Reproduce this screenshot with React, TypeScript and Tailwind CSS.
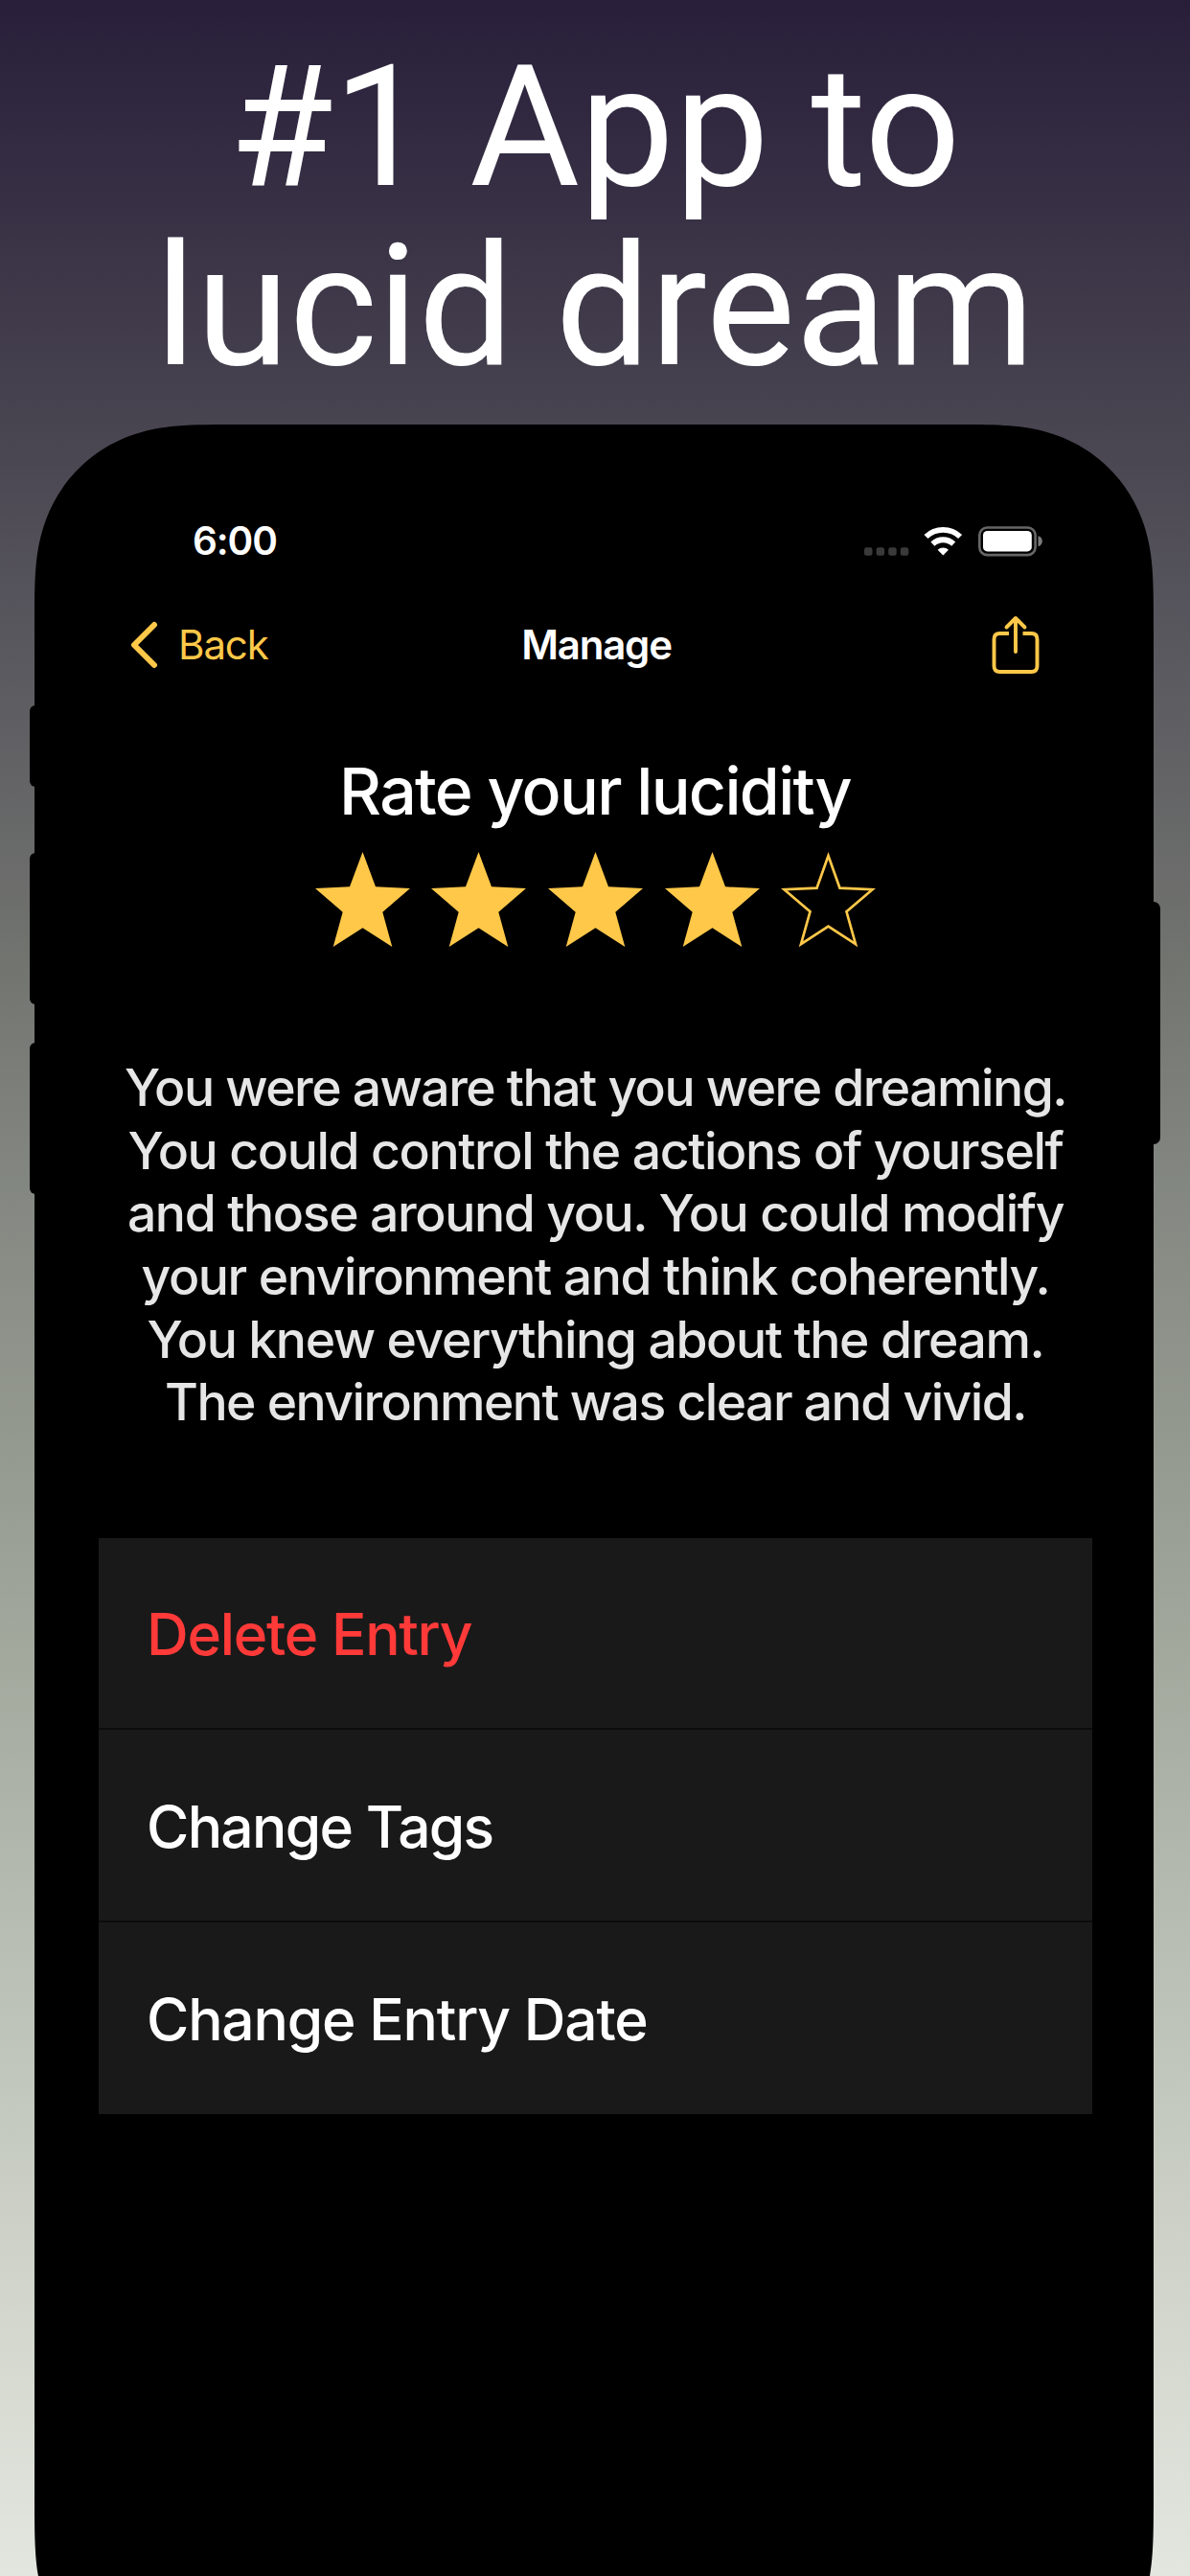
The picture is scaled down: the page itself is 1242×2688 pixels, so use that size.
const STARS = [true, true, true, true, false];

const ACTIONS = [
  { label: "Delete Entry", style: "text-[#ff3a39] tracking-[-1.25px]" },
  { label: "Change Tags", style: "text-white tracking-[-1.7px]" },
  { label: "Change Entry Date", style: "text-white tracking-[-1.2px]" },
];

const DESCRIPTION = [
  { text: "You were aware that you were dreaming.", style: "tracking-[-1.55px]" },
  { text: "You could control the actions of yourself", style: "tracking-[-1.4px]" },
  { text: "and those around you. You could modify", style: "tracking-[-1.4px]" },
  { text: "your environment and think coherently.", style: "tracking-[-1.4px]" },
  { text: "You knew everything about the dream.", style: "tracking-[-1.4px]" },
  { text: "The environment was clear and vivid.", style: "tracking-[-1.55px]" },
];

function Star({ filled }: { filled: boolean }) {
  return (
    <svg width="99" height="100" viewBox="0 0 99 100" className="block">
      {filled ? (
        <path d="M49.5 0L63 36.3 99 38 70.3 62.8 80.3 99 49.5 79.3 18.7 99 28.7 62.8 0 38 36 36.3z" fill="#ffc849" />
      ) : (
        <path
          d="M49.5 4L61.5 37.7 95.5 39.2 68.5 62.3 78 96.2 49.5 77.7 21 96.2 30.5 62.3 3.5 39.2 37.5 37.7z"
          fill="none"
          stroke="#ffc849"
          strokeWidth="2.7"
        />
      )}
    </svg>
  );
}

function StatusBar() {
  return (
    <div className="flex h-[32px] items-center justify-between pl-[165px] pr-[116px]">
      <span className="text-[40.5px] leading-[32px] font-semibold tracking-[-1.1px]">6:00</span>
      <svg width="186" height="32" viewBox="0 0 186 32">
        {/* signal */}
        <g fill="#3a3a3a">
          <rect x="0" y="22.3" width="8.5" height="8.5" rx="2.4" />
          <rect x="12.6" y="22.3" width="8.5" height="8.5" rx="2.4" />
          <rect x="25.2" y="22.3" width="8.5" height="8.5" rx="2.4" />
          <rect x="37.8" y="22.3" width="8.5" height="8.5" rx="2.4" />
        </g>
        {/* wifi */}
        <g fill="none" stroke="#fff" strokeWidth="5.8">
          <path d="M64.5 11A25.7 25.7 0 0 1 100.1 11" />
          <path d="M71.4 18.6A15.8 15.8 0 0 1 93.2 18.6" />
        </g>
        <path d="M82.3 30.5L76.6 24.7A8.4 8.4 0 0 1 88 24.7z" fill="#fff" />
        {/* battery */}
        <rect x="120.3" y="1.5" width="58.3" height="28.6" rx="8" fill="none" stroke="#666" strokeWidth="2.6" />
        <rect x="124" y="5" width="50.8" height="21.4" rx="4.5" fill="#fff" />
        <path d="M181.5 10.3C187.3 11.8 187.3 19.6 181.5 21.3z" fill="#7b7b7b" />
      </svg>
    </div>
  );
}

function NavBar() {
  return (
    <div className="grid h-[66px] grid-cols-3 items-center px-[100px] text-[42px] leading-[66px]">
      <div className="flex items-center text-[#ffc849]">
        <svg width="30" height="50" viewBox="0 0 30 50">
          <path d="M25 4L4 25 25 46" fill="none" stroke="#ffc849" strokeWidth="6" strokeLinecap="round" strokeLinejoin="round" />
        </svg>
        <span className="ml-[20px] tracking-[-1.1px]">Back</span>
      </div>
      <span className="pl-[5px] text-center font-semibold tracking-[-1.2px]">Manage</span>
      <svg width="52" height="64" viewBox="0 0 52 64" className="mr-[17px] justify-self-end">
        <g fill="none" stroke="#ffc849" strokeWidth="3.9">
          <path d="M18 20H8.5Q2.5 20 2.5 26V54Q2.5 60 8.5 60H41.5Q47.5 60 47.5 54V26Q47.5 20 41.5 20H32.5" />
          <path d="M25 39V4.5M15.5 13.5L25 4 34.5 13.5" strokeLinecap="round" strokeLinejoin="round" />
        </g>
      </svg>
    </div>
  );
}

export default function App() {
  return (
    <div className="relative h-[2688px] w-[1242px] overflow-hidden bg-[linear-gradient(180deg,#281e3a_0%,#484450_16.5%,#5b5a60_26%,#71736f_37%,#838781_46%,#a2a89c_64%,#bbc1b6_77%,#d1d5cb_89%,#e3e6df_100%)] font-['Inter','Liberation_Sans',sans-serif] text-white">
      <h1 className="h-[443px] pt-[40px] text-center font-['Roboto',sans-serif] text-[176px] leading-[187px] font-normal">
        #1 App to
        <br />
        lucid dream
      </h1>

      {/* side buttons */}
      <div className="absolute left-[31px] top-[736px] h-[85px] w-[12px] rounded-l-[6px] bg-black" />
      <div className="absolute left-[31px] top-[890px] h-[158px] w-[12px] rounded-l-[6px] bg-black" />
      <div className="absolute left-[31px] top-[1088px] h-[158px] w-[12px] rounded-l-[6px] bg-black" />
      <div className="absolute left-[1195px] top-[941px] h-[253px] w-[16px] rounded-r-[7px] bg-black" />

      <div className="relative ml-[36px] h-[2374px] w-[1168px] bg-black pt-[106px] [clip-path:path('M0_215C0_160_0_132_11.8_99.8C26.7_58.9_58.9_26.7_99.8_11.8C132_0_160_0_215_0H953C1008_0_1036_0_1068.2_11.8C1109.1_26.7_1141.3_58.9_1156.2_99.8C1168_132_1168_160_1168_215V2159C1168_2214_1168_2242_1156.2_2274.2C1141.3_2315.1_1109.1_2347.3_1068.2_2362.2C1036_2374_1008_2374_953_2374H215C160_2374_132_2374_99.8_2362.2C58.9_2347.3_26.7_2315.1_11.8_2274.2C0_2242_0_2214_0_2159Z')]">
        <StatusBar />
        <div className="mt-[59px]">
          <NavBar />
        </div>

        <h2 className="mt-[79px] pl-[2px] text-center text-[68px] leading-[80px] font-medium tracking-[-1.7px]">Rate your lucidity</h2>
        <div className="mt-[24px] ml-[292.5px] flex gap-[22.7px]">
          {STARS.map((filled, i) => (
            <Star key={i} filled={filled} />
          ))}
        </div>

        <div className="mt-[113px] pl-[3px] text-center text-[53.5px] leading-[65.65px] font-medium whitespace-nowrap text-[#e6e6e6]">
          {DESCRIPTION.map((line) => (
            <p key={line.text} className={line.style}>
              {line.text}
            </p>
          ))}
        </div>

        <ul className="mt-[109px] ml-[67px] w-[1037px] bg-[#191919]">
          {ACTIONS.map((action) => (
            <li key={action.label} className="flex h-[200.3px] items-center border-b-2 border-[#0c0c0c] pt-[3px] pl-[50px] text-[60.5px] leading-none font-medium last:border-b-0">
              <span className={action.style}>{action.label}</span>
            </li>
          ))}
        </ul>
      </div>
    </div>
  );
}
